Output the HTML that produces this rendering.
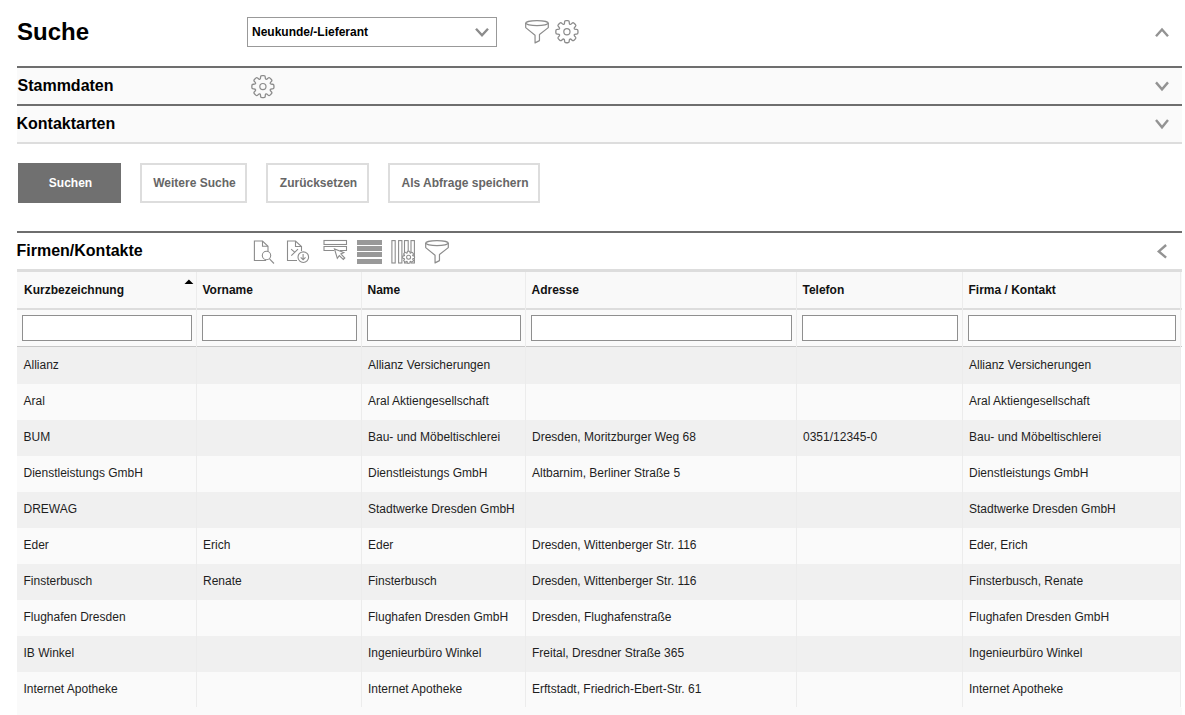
<!DOCTYPE html>
<html><head><meta charset="utf-8"><title>Suche</title>
<style>
html,body{margin:0;padding:0;background:#fff;width:1185px;height:715px;overflow:hidden;font-family:"Liberation Sans", sans-serif;}
#root{position:relative;width:1185px;height:715px;overflow:hidden}
</style></head><body><div id="root">
<div style="position:absolute;left:17px;top:19.68px;font-size:24px;line-height:24px;font-weight:bold;color:#000;white-space:nowrap;">Suche</div>
<div style="position:absolute;left:247px;top:17px;width:248px;height:28px;border:1px solid #999;background:#fff"></div>
<div style="position:absolute;left:252px;top:25.84px;font-size:12px;line-height:12px;font-weight:bold;color:#000;white-space:nowrap;">Neukunde/-Lieferant</div>
<div style="position:absolute;left:17px;top:66px;width:1165px;height:2px;background:#6e6e6e;"></div>
<div style="position:absolute;left:17px;top:68px;width:1165px;height:36px;background:#fafafa;"></div>
<div style="position:absolute;left:17.5px;top:78.46px;font-size:16px;line-height:16px;font-weight:bold;color:#000;white-space:nowrap;">Stammdaten</div>
<div style="position:absolute;left:17px;top:104px;width:1165px;height:2px;background:#6e6e6e;"></div>
<div style="position:absolute;left:17px;top:106px;width:1165px;height:36px;background:#fafafa;"></div>
<div style="position:absolute;left:16.5px;top:116.46px;font-size:16px;line-height:16px;font-weight:bold;color:#000;white-space:nowrap;">Kontaktarten</div>
<div style="position:absolute;left:17px;top:142px;width:1165px;height:2px;background:#ddd;"></div>
<div style="position:absolute;left:18px;top:163px;width:103px;height:40px;background:#707070;color:#fff;font-weight:bold;font-size:12px;line-height:40px;text-align:center;padding-left:2px;box-sizing:border-box">Suchen</div>
<div style="position:absolute;left:140px;top:163px;width:107px;height:40px;box-sizing:border-box;border:2px solid #ddd;background:#fff;color:#666;font-weight:bold;font-size:12px;line-height:36px;text-align:center;padding-left:2px">Weitere Suche</div>
<div style="position:absolute;left:266px;top:163px;width:103px;height:40px;box-sizing:border-box;border:2px solid #ddd;background:#fff;color:#666;font-weight:bold;font-size:12px;line-height:36px;text-align:center;padding-left:2px">Zurücksetzen</div>
<div style="position:absolute;left:388px;top:163px;width:152px;height:40px;box-sizing:border-box;border:2px solid #ddd;background:#fff;color:#666;font-weight:bold;font-size:12px;line-height:36px;text-align:center;padding-left:2px">Als Abfrage speichern</div>
<div style="position:absolute;left:17px;top:231px;width:1165px;height:2px;background:#6e6e6e;"></div>
<div style="position:absolute;left:16.5px;top:243.46px;font-size:16px;line-height:16px;font-weight:bold;color:#000;white-space:nowrap;">Firmen/Kontakte</div>
<div style="position:absolute;left:17px;top:269px;width:1165px;height:3px;background:#ddd;"></div>
<div style="position:absolute;left:17px;top:272px;width:1165px;height:36px;background:#f9f9f9;"></div>
<div style="position:absolute;left:17px;top:308px;width:1165px;height:2px;background:#ddd;"></div>
<div style="position:absolute;left:17px;top:310px;width:1165px;height:36px;background:#fafafa;"></div>
<div style="position:absolute;left:17px;top:346px;width:1165px;height:1px;background:#c6c6c6;"></div>
<div style="position:absolute;left:17px;top:347px;width:1164px;height:37px;background:#f0f0f0;"></div>
<div style="position:absolute;left:17px;top:384px;width:1164px;height:36px;background:#fafafa;"></div>
<div style="position:absolute;left:17px;top:420px;width:1164px;height:36px;background:#f0f0f0;"></div>
<div style="position:absolute;left:17px;top:456px;width:1164px;height:36px;background:#fafafa;"></div>
<div style="position:absolute;left:17px;top:492px;width:1164px;height:36px;background:#f0f0f0;"></div>
<div style="position:absolute;left:17px;top:528px;width:1164px;height:36px;background:#fafafa;"></div>
<div style="position:absolute;left:17px;top:564px;width:1164px;height:36px;background:#f0f0f0;"></div>
<div style="position:absolute;left:17px;top:600px;width:1164px;height:36px;background:#fafafa;"></div>
<div style="position:absolute;left:17px;top:636px;width:1164px;height:36px;background:#f0f0f0;"></div>
<div style="position:absolute;left:17px;top:672px;width:1164px;height:36px;background:#fafafa;"></div>
<div style="position:absolute;left:17px;top:708px;width:1165px;height:7px;background:#fafafa;"></div>
<div style="position:absolute;left:196px;top:272px;width:1px;height:435px;background:#ececec;"></div>
<div style="position:absolute;left:361px;top:272px;width:1px;height:435px;background:#ececec;"></div>
<div style="position:absolute;left:525px;top:272px;width:1px;height:435px;background:#ececec;"></div>
<div style="position:absolute;left:796px;top:272px;width:1px;height:435px;background:#ececec;"></div>
<div style="position:absolute;left:962px;top:272px;width:1px;height:435px;background:#ececec;"></div>
<div style="position:absolute;left:1180px;top:272px;width:1px;height:435px;background:#ececec;"></div>
<div style="position:absolute;left:24px;top:283.84px;font-size:12px;line-height:12px;font-weight:bold;color:#111;white-space:nowrap;">Kurzbezeichnung</div>
<div style="position:absolute;left:22px;top:315px;width:168px;height:24px;border:1px solid #8f8f8f;background:#fff"></div>
<div style="position:absolute;left:23.5px;top:358.84px;font-size:12px;line-height:12px;font-weight:normal;color:#1e1e1e;white-space:nowrap;">Allianz</div>
<div style="position:absolute;left:23.5px;top:394.84px;font-size:12px;line-height:12px;font-weight:normal;color:#1e1e1e;white-space:nowrap;">Aral</div>
<div style="position:absolute;left:23.5px;top:430.84px;font-size:12px;line-height:12px;font-weight:normal;color:#1e1e1e;white-space:nowrap;">BUM</div>
<div style="position:absolute;left:23.5px;top:466.84px;font-size:12px;line-height:12px;font-weight:normal;color:#1e1e1e;white-space:nowrap;">Dienstleistungs GmbH</div>
<div style="position:absolute;left:23.5px;top:502.84px;font-size:12px;line-height:12px;font-weight:normal;color:#1e1e1e;white-space:nowrap;">DREWAG</div>
<div style="position:absolute;left:23.5px;top:538.84px;font-size:12px;line-height:12px;font-weight:normal;color:#1e1e1e;white-space:nowrap;">Eder</div>
<div style="position:absolute;left:23.5px;top:574.84px;font-size:12px;line-height:12px;font-weight:normal;color:#1e1e1e;white-space:nowrap;">Finsterbusch</div>
<div style="position:absolute;left:23.5px;top:610.84px;font-size:12px;line-height:12px;font-weight:normal;color:#1e1e1e;white-space:nowrap;">Flughafen Dresden</div>
<div style="position:absolute;left:23.5px;top:646.84px;font-size:12px;line-height:12px;font-weight:normal;color:#1e1e1e;white-space:nowrap;">IB Winkel</div>
<div style="position:absolute;left:23.5px;top:682.84px;font-size:12px;line-height:12px;font-weight:normal;color:#1e1e1e;white-space:nowrap;">Internet Apotheke</div>
<div style="position:absolute;left:202.5px;top:283.84px;font-size:12px;line-height:12px;font-weight:bold;color:#111;white-space:nowrap;">Vorname</div>
<div style="position:absolute;left:202px;top:315px;width:153px;height:24px;border:1px solid #8f8f8f;background:#fff"></div>
<div style="position:absolute;left:203px;top:538.84px;font-size:12px;line-height:12px;font-weight:normal;color:#1e1e1e;white-space:nowrap;">Erich</div>
<div style="position:absolute;left:203px;top:574.84px;font-size:12px;line-height:12px;font-weight:normal;color:#1e1e1e;white-space:nowrap;">Renate</div>
<div style="position:absolute;left:367.5px;top:283.84px;font-size:12px;line-height:12px;font-weight:bold;color:#111;white-space:nowrap;">Name</div>
<div style="position:absolute;left:367px;top:315px;width:152px;height:24px;border:1px solid #8f8f8f;background:#fff"></div>
<div style="position:absolute;left:368px;top:358.84px;font-size:12px;line-height:12px;font-weight:normal;color:#1e1e1e;white-space:nowrap;">Allianz Versicherungen</div>
<div style="position:absolute;left:368px;top:394.84px;font-size:12px;line-height:12px;font-weight:normal;color:#1e1e1e;white-space:nowrap;">Aral Aktiengesellschaft</div>
<div style="position:absolute;left:368px;top:430.84px;font-size:12px;line-height:12px;font-weight:normal;color:#1e1e1e;white-space:nowrap;">Bau- und Möbeltischlerei</div>
<div style="position:absolute;left:368px;top:466.84px;font-size:12px;line-height:12px;font-weight:normal;color:#1e1e1e;white-space:nowrap;">Dienstleistungs GmbH</div>
<div style="position:absolute;left:368px;top:502.84px;font-size:12px;line-height:12px;font-weight:normal;color:#1e1e1e;white-space:nowrap;">Stadtwerke Dresden GmbH</div>
<div style="position:absolute;left:368px;top:538.84px;font-size:12px;line-height:12px;font-weight:normal;color:#1e1e1e;white-space:nowrap;">Eder</div>
<div style="position:absolute;left:368px;top:574.84px;font-size:12px;line-height:12px;font-weight:normal;color:#1e1e1e;white-space:nowrap;">Finsterbusch</div>
<div style="position:absolute;left:368px;top:610.84px;font-size:12px;line-height:12px;font-weight:normal;color:#1e1e1e;white-space:nowrap;">Flughafen Dresden GmbH</div>
<div style="position:absolute;left:368px;top:646.84px;font-size:12px;line-height:12px;font-weight:normal;color:#1e1e1e;white-space:nowrap;">Ingenieurbüro Winkel</div>
<div style="position:absolute;left:368px;top:682.84px;font-size:12px;line-height:12px;font-weight:normal;color:#1e1e1e;white-space:nowrap;">Internet Apotheke</div>
<div style="position:absolute;left:531.5px;top:283.84px;font-size:12px;line-height:12px;font-weight:bold;color:#111;white-space:nowrap;">Adresse</div>
<div style="position:absolute;left:531px;top:315px;width:259px;height:24px;border:1px solid #8f8f8f;background:#fff"></div>
<div style="position:absolute;left:532px;top:430.84px;font-size:12px;line-height:12px;font-weight:normal;color:#1e1e1e;white-space:nowrap;">Dresden, Moritzburger Weg 68</div>
<div style="position:absolute;left:532px;top:466.84px;font-size:12px;line-height:12px;font-weight:normal;color:#1e1e1e;white-space:nowrap;">Altbarnim, Berliner Straße 5</div>
<div style="position:absolute;left:532px;top:538.84px;font-size:12px;line-height:12px;font-weight:normal;color:#1e1e1e;white-space:nowrap;">Dresden, Wittenberger Str. 116</div>
<div style="position:absolute;left:532px;top:574.84px;font-size:12px;line-height:12px;font-weight:normal;color:#1e1e1e;white-space:nowrap;">Dresden, Wittenberger Str. 116</div>
<div style="position:absolute;left:532px;top:610.84px;font-size:12px;line-height:12px;font-weight:normal;color:#1e1e1e;white-space:nowrap;">Dresden, Flughafenstraße</div>
<div style="position:absolute;left:532px;top:646.84px;font-size:12px;line-height:12px;font-weight:normal;color:#1e1e1e;white-space:nowrap;">Freital, Dresdner Straße 365</div>
<div style="position:absolute;left:532px;top:682.84px;font-size:12px;line-height:12px;font-weight:normal;color:#1e1e1e;white-space:nowrap;">Erftstadt, Friedrich-Ebert-Str. 61</div>
<div style="position:absolute;left:802.5px;top:283.84px;font-size:12px;line-height:12px;font-weight:bold;color:#111;white-space:nowrap;">Telefon</div>
<div style="position:absolute;left:802px;top:315px;width:154px;height:24px;border:1px solid #8f8f8f;background:#fff"></div>
<div style="position:absolute;left:803px;top:430.84px;font-size:12px;line-height:12px;font-weight:normal;color:#1e1e1e;white-space:nowrap;">0351/12345-0</div>
<div style="position:absolute;left:968.5px;top:283.84px;font-size:12px;line-height:12px;font-weight:bold;color:#111;white-space:nowrap;">Firma / Kontakt</div>
<div style="position:absolute;left:968px;top:315px;width:206px;height:24px;border:1px solid #8f8f8f;background:#fff"></div>
<div style="position:absolute;left:969px;top:358.84px;font-size:12px;line-height:12px;font-weight:normal;color:#1e1e1e;white-space:nowrap;">Allianz Versicherungen</div>
<div style="position:absolute;left:969px;top:394.84px;font-size:12px;line-height:12px;font-weight:normal;color:#1e1e1e;white-space:nowrap;">Aral Aktiengesellschaft</div>
<div style="position:absolute;left:969px;top:430.84px;font-size:12px;line-height:12px;font-weight:normal;color:#1e1e1e;white-space:nowrap;">Bau- und Möbeltischlerei</div>
<div style="position:absolute;left:969px;top:466.84px;font-size:12px;line-height:12px;font-weight:normal;color:#1e1e1e;white-space:nowrap;">Dienstleistungs GmbH</div>
<div style="position:absolute;left:969px;top:502.84px;font-size:12px;line-height:12px;font-weight:normal;color:#1e1e1e;white-space:nowrap;">Stadtwerke Dresden GmbH</div>
<div style="position:absolute;left:969px;top:538.84px;font-size:12px;line-height:12px;font-weight:normal;color:#1e1e1e;white-space:nowrap;">Eder, Erich</div>
<div style="position:absolute;left:969px;top:574.84px;font-size:12px;line-height:12px;font-weight:normal;color:#1e1e1e;white-space:nowrap;">Finsterbusch, Renate</div>
<div style="position:absolute;left:969px;top:610.84px;font-size:12px;line-height:12px;font-weight:normal;color:#1e1e1e;white-space:nowrap;">Flughafen Dresden GmbH</div>
<div style="position:absolute;left:969px;top:646.84px;font-size:12px;line-height:12px;font-weight:normal;color:#1e1e1e;white-space:nowrap;">Ingenieurbüro Winkel</div>
<div style="position:absolute;left:969px;top:682.84px;font-size:12px;line-height:12px;font-weight:normal;color:#1e1e1e;white-space:nowrap;">Internet Apotheke</div>
<svg style="position:absolute;left:0;top:0" width="1185" height="715" viewBox="0 0 1185 715">
<path d="M476,28.8 L482,35.2 L488,28.8" fill="none" stroke="#8c8c8c" stroke-width="2.4"/>
<g transform="translate(525,20)" fill="none" stroke="#8c8c8c" stroke-width="1.2"><ellipse cx="12" cy="3.1" rx="11.3" ry="2.55"/><path d="M0.7,3.1 L0.7,7.6 L10.05,15.3 L10.05,22.9 L14.46,20.6 L14.46,14.55 L23.3,7.6 L23.3,3.1" stroke-linejoin="round"/></g>
<path d="M564.55,22.65 L564.55,22.05 Q564.55,20.65 565.95,20.65 L567.85,20.65 Q569.25,20.65 569.25,22.05 L569.25,22.65 Q569.25,24.05 569.94,24.34 L569.95,24.34 Q570.65,24.63 571.64,23.64 L572.06,23.21 Q573.05,22.22 574.04,23.21 L575.39,24.56 Q576.38,25.55 575.39,26.54 L574.96,26.96 Q573.97,27.95 574.26,28.65 L574.26,28.66 Q574.55,29.35 575.95,29.35 L576.55,29.35 Q577.95,29.35 577.95,30.75 L577.95,32.65 Q577.95,34.05 576.55,34.05 L575.95,34.05 Q574.55,34.05 574.26,34.74 L574.26,34.75 Q573.97,35.45 574.96,36.44 L575.39,36.86 Q576.38,37.85 575.39,38.84 L574.04,40.19 Q573.05,41.18 572.06,40.19 L571.64,39.76 Q570.65,38.77 569.95,39.06 L569.94,39.06 Q569.25,39.35 569.25,40.75 L569.25,41.35 Q569.25,42.75 567.85,42.75 L565.95,42.75 Q564.55,42.75 564.55,41.35 L564.55,40.75 Q564.55,39.35 563.86,39.06 L563.85,39.06 Q563.15,38.77 562.16,39.76 L561.74,40.19 Q560.75,41.18 559.76,40.19 L558.41,38.84 Q557.42,37.85 558.41,36.86 L558.84,36.44 Q559.83,35.45 559.54,34.75 L559.54,34.74 Q559.25,34.05 557.85,34.05 L557.25,34.05 Q555.85,34.05 555.85,32.65 L555.85,30.75 Q555.85,29.35 557.25,29.35 L557.85,29.35 Q559.25,29.35 559.54,28.66 L559.54,28.65 Q559.83,27.95 558.84,26.96 L558.41,26.54 Q557.42,25.55 558.41,24.56 L559.76,23.21 Q560.75,22.22 561.74,23.21 L562.16,23.64 Q563.15,24.63 563.85,24.34 L563.86,24.34 Q564.55,24.05 564.55,22.65 Z" fill="none" stroke="#8c8c8c" stroke-width="1.3" stroke-linejoin="round"/><circle cx="566.9" cy="31.7" r="3.1" fill="none" stroke="#8c8c8c" stroke-width="1.2"/>
<path d="M1156,36.2 L1162,29.5 L1168,36.2" fill="none" stroke="#939393" stroke-width="2.4"/>
<path d="M260.55,77.55 L260.55,76.95 Q260.55,75.55 261.95,75.55 L263.85,75.55 Q265.25,75.55 265.25,76.95 L265.25,77.55 Q265.25,78.95 265.94,79.24 L265.95,79.24 Q266.65,79.53 267.64,78.54 L268.06,78.11 Q269.05,77.12 270.04,78.11 L271.39,79.46 Q272.38,80.45 271.39,81.44 L270.96,81.86 Q269.97,82.85 270.26,83.55 L270.26,83.56 Q270.55,84.25 271.95,84.25 L272.55,84.25 Q273.95,84.25 273.95,85.65 L273.95,87.55 Q273.95,88.95 272.55,88.95 L271.95,88.95 Q270.55,88.95 270.26,89.64 L270.26,89.65 Q269.97,90.35 270.96,91.34 L271.39,91.76 Q272.38,92.75 271.39,93.74 L270.04,95.09 Q269.05,96.08 268.06,95.09 L267.64,94.66 Q266.65,93.67 265.95,93.96 L265.94,93.96 Q265.25,94.25 265.25,95.65 L265.25,96.25 Q265.25,97.65 263.85,97.65 L261.95,97.65 Q260.55,97.65 260.55,96.25 L260.55,95.65 Q260.55,94.25 259.86,93.96 L259.85,93.96 Q259.15,93.67 258.16,94.66 L257.74,95.09 Q256.75,96.08 255.76,95.09 L254.41,93.74 Q253.42,92.75 254.41,91.76 L254.84,91.34 Q255.83,90.35 255.54,89.65 L255.54,89.64 Q255.25,88.95 253.85,88.95 L253.25,88.95 Q251.85,88.95 251.85,87.55 L251.85,85.65 Q251.85,84.25 253.25,84.25 L253.85,84.25 Q255.25,84.25 255.54,83.56 L255.54,83.55 Q255.83,82.85 254.84,81.86 L254.41,81.44 Q253.42,80.45 254.41,79.46 L255.76,78.11 Q256.75,77.12 257.74,78.11 L258.16,78.54 Q259.15,79.53 259.85,79.24 L259.86,79.24 Q260.55,78.95 260.55,77.55 Z" fill="none" stroke="#8c8c8c" stroke-width="1.3" stroke-linejoin="round"/><circle cx="262.9" cy="86.6" r="3.1" fill="none" stroke="#8c8c8c" stroke-width="1.2"/>
<path d="M1156,82.4 L1162,89.3 L1168,82.4" fill="none" stroke="#939393" stroke-width="2.4"/>
<path d="M1156,119.9 L1162,127.3 L1168,119.9" fill="none" stroke="#939393" stroke-width="2.4"/>
<g fill="none" stroke="#8c8c8c" stroke-width="1.1"><path d="M266,260.5 L254.4,260.5 L254.4,241 L262.5,241 L268,246.3 L268,251"/><path d="M262.5,241 L262.5,246.3 L268,246.3"/><circle cx="266.5" cy="255.5" r="4.2"/><path d="M269.5,258.8 L274,263.5"/></g>
<g fill="none" stroke="#8c8c8c" stroke-width="1.1"><path d="M297,260.5 L287.5,260.5 L287.5,241 L295.5,241 L301.5,246.5 L301.5,251"/><path d="M295.5,241 L295.5,246.5 L301.5,246.5"/><path d="M291.1,249.2 L295.2,252.7 M298,249.2 L291.3,255.6"/><circle cx="303.3" cy="257.2" r="5.3"/><path d="M303.1,254 L303.1,259.8 M300.7,257.3 L303.1,259.8 L305.5,257.3"/></g>
<g fill="none" stroke="#8c8c8c" stroke-width="1.1"><rect x="324" y="240.5" width="22.5" height="4"/><path d="M334,250.5 L324,250.5 L324,246.5 L346.5,246.5 L346.5,250.5 L340,250.5"/><path d="M334.5,249 L337.3,258.3 L339.3,255.6 L343.3,259.5 L344.8,258 L340.9,254 L343.8,252.6 Z"/></g>
<rect x="357" y="240" width="25" height="5" fill="#999"/>
<rect x="357" y="246" width="25" height="5" fill="#999"/>
<rect x="357" y="252" width="25" height="5" fill="#999"/>
<rect x="357" y="259" width="25" height="5" fill="#999"/>
<g fill="none" stroke="#8c8c8c" stroke-width="1.1"><rect x="391.9" y="240.6" width="3.3" height="22.4"/><rect x="398.6" y="240.6" width="3.3" height="22.4"/><rect x="404.5" y="240.6" width="3.7" height="22.4"/><rect x="411" y="240.6" width="3.4" height="22.4"/></g>
<path d="M407.25,252.41 L407.25,251.85 Q407.25,251.25 407.85,251.25 L409.35,251.25 Q409.95,251.25 409.95,251.85 L409.95,252.41 Q409.95,253.01 410.28,253.15 L410.28,253.15 Q410.61,253.28 411.03,252.86 L411.43,252.46 Q411.85,252.04 412.28,252.46 L413.34,253.52 Q413.76,253.95 413.34,254.37 L412.94,254.77 Q412.52,255.19 412.65,255.52 L412.65,255.52 Q412.79,255.85 413.39,255.85 L413.95,255.85 Q414.55,255.85 414.55,256.45 L414.55,257.95 Q414.55,258.55 413.95,258.55 L413.39,258.55 Q412.79,258.55 412.65,258.88 L412.65,258.88 Q412.52,259.21 412.94,259.63 L413.34,260.03 Q413.76,260.45 413.34,260.88 L412.28,261.94 Q411.85,262.36 411.43,261.94 L411.03,261.54 Q410.61,261.12 410.28,261.25 L410.28,261.25 Q409.95,261.39 409.95,261.99 L409.95,262.55 Q409.95,263.15 409.35,263.15 L407.85,263.15 Q407.25,263.15 407.25,262.55 L407.25,261.99 Q407.25,261.39 406.92,261.25 L406.92,261.25 Q406.59,261.12 406.17,261.54 L405.77,261.94 Q405.35,262.36 404.92,261.94 L403.86,260.88 Q403.44,260.45 403.86,260.03 L404.26,259.63 Q404.68,259.21 404.55,258.88 L404.55,258.88 Q404.41,258.55 403.81,258.55 L403.25,258.55 Q402.65,258.55 402.65,257.95 L402.65,256.45 Q402.65,255.85 403.25,255.85 L403.81,255.85 Q404.41,255.85 404.55,255.52 L404.55,255.52 Q404.68,255.19 404.26,254.77 L403.86,254.37 Q403.44,253.95 403.86,253.52 L404.92,252.46 Q405.35,252.04 405.77,252.46 L406.17,252.86 Q406.59,253.28 406.92,253.15 L406.92,253.15 Q407.25,253.01 407.25,252.41 Z" fill="#fff" stroke="#8c8c8c" stroke-width="1.05"/><circle cx="408.6" cy="257.2" r="2" fill="none" stroke="#8c8c8c" stroke-width="1.05"/>
<g transform="translate(425,240)" fill="none" stroke="#8c8c8c" stroke-width="1.2"><ellipse cx="12" cy="3.1" rx="11.3" ry="2.55"/><path d="M0.7,3.1 L0.7,7.6 L10.05,15.3 L10.05,22.9 L14.46,20.6 L14.46,14.55 L23.3,7.6 L23.3,3.1" stroke-linejoin="round"/></g>
<path d="M1166.1,245 L1158.8,251.4 L1166.1,257.7" fill="none" stroke="#939393" stroke-width="2.4"/>
<path d="M184.5,284 L188.9,279.4 L193.4,284 Z" fill="#000"/>
</svg>
</div></body></html>
